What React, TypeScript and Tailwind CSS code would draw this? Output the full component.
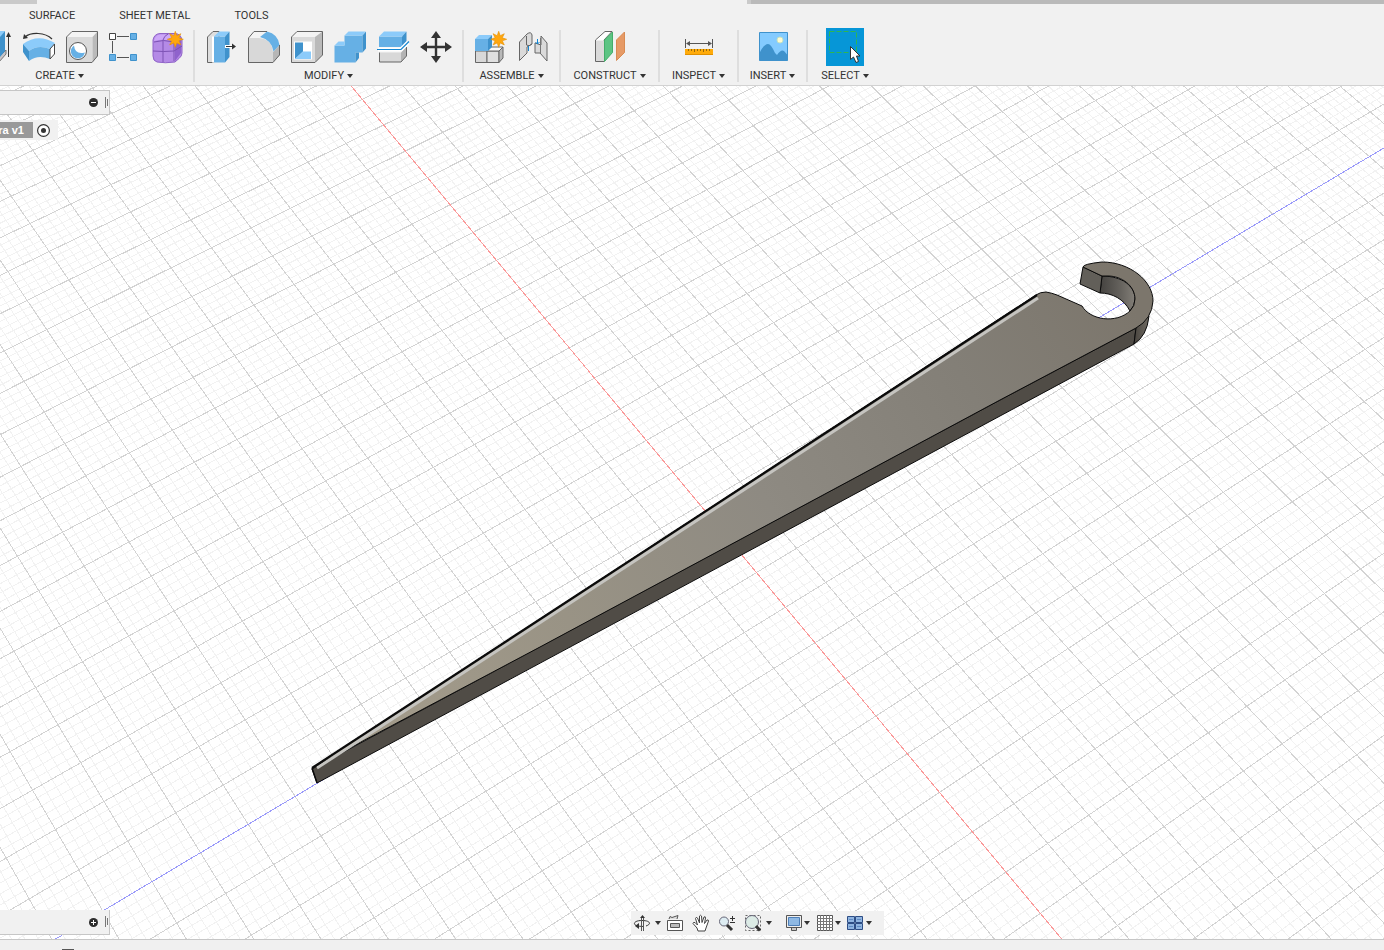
import type { ReactNode } from "react";
import clsx from "clsx";

const Caret = () => (
    <svg width="6" height="4" viewBox="0 0 6 4" className="shrink-0">
        <path d="M0 0h6L3 4z" fill="#333" />
    </svg>
);

const Icon = ({ children }: { children: ReactNode }) => (
    <svg
        width="34"
        height="34"
        viewBox="0 0 34 34"
        fill="none"
        className="shrink-0"
    >
        {children}
    </svg>
);

const Star = ({ x, y }: { x: number; y: number }) => (
    <path
        transform={`translate(${x} ${y})`}
        d="M0-8 1.5-3.6 5.6-5.6 3.6-1.5 8 0 3.6 1.5 5.6 5.6 1.5 3.6 0 8-1.5 3.6-5.6 5.6-3.6 1.5-8 0-3.6-1.5-5.6-5.6-1.5-3.6z"
        fill="#ffa70f"
        stroke="#e69100"
        strokeWidth=".6"
    />
);

const Extrude = () => (
    <Icon>
        <path d="M4 32V27h16l7-7v4l-7 8z" fill="#c9c5c8" stroke="#777" />
        <path d="M4 8h17v19H4z" fill="#66b0e5" />
        <path d="M4 8 11 1h15l-5 7z" fill="#8ccbfa" />
        <path d="M21 7 26 1v20l-5 6z" fill="#3f92cc" />
        <path d="M29.500 27V5" stroke="#333" />
        <path d="M29.500 2 27 7h5z" fill="#333" />
    </Icon>
);

const Revolve = () => (
    <Icon>
        <path d="M30 9C23 2 9 2 3 7" stroke="#333" strokeWidth="1.200" />
        <path d="m1 9 1-5 4 4z" fill="#333" />
        <path d="M1 14Q16 3 33 13L28 19Q16 14 7 21Z" fill="#8ccbfa" />
        <path d="M7 21Q16 14 28 19V29Q16 24 7 31Z" fill="#66b0e5" />
        <path d="M1 14 7 21V31L1 22Z" fill="#3f92cc" />
        <path d="M28 19 32.500 14V24L28 29Z" fill="#fff" stroke="#444" />
    </Icon>
);

const Hole = () => (
    <Icon>
        <path d="M1.500 7h26v25.500h-26z" fill="#dadada" />
        <path d="m1.500 7 5.500-5.500h25.500L27.500 7z" fill="#f4f4f4" />
        <path d="m27.500 7 5-5.500V26l-5 6.500z" fill="#bababa" />
        <path d="M1.500 7 7 1.500h25.500V26l-5.500 6.500H1.500z" stroke="#666" />
        <circle cx="13" cy="21" r="8.500" fill="#fff" stroke="#555" />
        <path d="M9 15.500A7 7 0 1 0 19.800 22.500Q10 25 9 15.500Z" fill="#66b0e5" />
    </Icon>
);

const Pattern = () => (
    <Icon>
        <path d="M9 6.500h12M4.500 11v12M9 27.500h12" stroke="#555" />
        <path d="M1.500 3.500h6v6h-6z" fill="#fff" stroke="#444" />
        <path
            d="M22.500 3.500h6v6h-6zM1.500 24.500h6v6h-6zM22.500 24.500h6v6h-6z"
            fill="#66b0e5"
            stroke="#3f92cc"
        />
    </Icon>
);

const Form = () => (
    <Icon>
        <path
            d="M2 10Q3 4 9 3.500H24Q30 4 31 10V23Q31 26 28 28.500L24 32Q14 33.500 6 32Q2 31 2 26Z"
            fill="#b48ae6"
            stroke="#8f63c8"
        />
        <path d="M3 11Q4 5 9 4.500H24L21 10.500Q10 9 3 11Z" fill="#cda7f8" />
        <path d="M24 12 30 8V23L24 31Z" fill="#8f62cc" />
        <path
            d="M3 12Q12 9 23 12L30 8M2 21Q13 22 23 21L31 16M12 32V10Q13 6 17 4M23 31V12"
            stroke="#7c52b4"
        />
        <Star x={24.300} y={9.300} />
    </Icon>
);

const PressPull = () => (
    <Icon>
        <path d="M3.500 32.500V7L9 1.500h6V28l-6 4.500z" fill="#dedede" stroke="#666" />
        <path d="M9 6.500v26" stroke="#fff" strokeWidth="2" />
        <path d="M10 6.500h11v26H10z" fill="#66b0e5" />
        <path d="m10 6.500 5-5h10.500l-4.500 5z" fill="#8ccbfa" />
        <path d="m21 6.500 4.500-5V27L21 32.500z" fill="#3f92cc" />
        <path d="M21 16.500h8" stroke="#fff" strokeWidth="3" />
        <path d="M22 16.500h8" stroke="#333" />
        <path d="m28 13.500 4 3-4 3z" fill="#333" />
    </Icon>
);

const Fillet = () => (
    <Icon>
        <path d="M1.500 8 7 1.500h14L32 15v10l-6 7.500H1.500z" fill="#f4f4f4" />
        <path d="M1.500 8H12Q25 9 26 22V32.500H1.500Z" fill="#d8d8d8" />
        <path d="m26 22 6.500-7v10.500L26 32.500z" fill="#b6b6b6" />
        <path d="M13 7 20 1.500Q31 4 32.500 15L26.500 21.500Q25 10 13 7Z" fill="#66b0e5" />
        <path d="M20 1.500H7L1.500 8V32.500H26L32.500 25V15" stroke="#666" />
    </Icon>
);

const Shell = () => (
    <Icon>
        <path d="M1.500 7H25v25.500H1.500z" fill="#dadada" />
        <path d="M1.500 7 7 1.500h25.500L25 7z" fill="#f4f4f4" />
        <path d="m25 7 7.500-5.500V25L25 32.500z" fill="#bababa" />
        <path d="M1.500 7 7 1.500h25.500V25L25 32.500H1.500z" stroke="#666" />
        <path d="M4 11.500h18v18H4z" fill="#fff" />
        <path d="M5 12.500h8v9l-8 7.500z" fill="#3f92cc" />
        <path d="m5 29 8-7.500h8V29z" fill="#8ccbfa" />
    </Icon>
);

const Combine = () => (
    <Icon>
        <path d="M1.500 15.500h10V5.500h18v17h-7v10h-21z" fill="#66b0e5" />
        <path d="m11.500 5.500 4-4h17l-3 4zM1.500 15.500l4-4h6v4z" fill="#8ccbfa" />
        <path d="m29.500 5.500 3.500-4v17l-3.500 4zM22.500 22.500H26V28l-3.500 4.500z" fill="#3f92cc" />
    </Icon>
);

const Split = () => (
    <Icon>
        <path d="M3 6.500h23V17H3z" fill="#66b0e5" />
        <path d="M3 6.500 8 1.500h22.500l-4.500 5z" fill="#8ccbfa" />
        <path d="m26 6.500 4.500-5V12L26 17z" fill="#3f92cc" />
        <path d="M3.500 22.500H25V32H3.500z" fill="#d8d8d8" />
        <path d="m25 22.500 5.500-6V26L25 32z" fill="#b4b4b4" />
        <path d="M3.500 22.500V32H25l5.500-6v-9" stroke="#666" />
        <path d="M2 19.500h23l7-7" stroke="#fff" strokeWidth="4" />
        <path d="M1 19.500h24l8-8" stroke="#1686d0" strokeWidth="1.200" />
    </Icon>
);

const Move = () => (
    <Icon>
        <path d="M5 17h24M17 5v24" stroke="#333" strokeWidth="2.400" />
        <path
            d="m17 1 5 7H12zM17 33l5-7H12zM1 17l7-5v10zM33 17l-7-5v10z"
            fill="#333"
        />
    </Icon>
);

const NewComponent = () => (
    <Icon>
        <path d="M2.500 21H14v11.500H2.500z" fill="#d8d8d8" stroke="#666" />
        <path d="M14 21h12v11.500H14z" fill="#e0e0e0" stroke="#666" />
        <path d="m14 21 4-4h12l-4 4z" fill="#fafafa" stroke="#666" />
        <path d="m26 21 4-4v11l-4 4.500z" fill="#b8b8b8" stroke="#666" />
        <path d="M2 9h13v12H2z" fill="#66b0e5" />
        <path d="m2 9 4-4h13l-4 4z" fill="#8ccbfa" />
        <path d="m15 9 4-4v12l-4 4z" fill="#3f92cc" />
        <Star x={25.700} y={9.300} />
    </Icon>
);

const Joint = () => (
    <Icon>
        <path
            d="M3.500 12 11 4Q15 1 16 5V14L11 17V23L3.500 30.500Z"
            fill="#dadada"
            stroke="#666"
        />
        <path d="M10.500 6V15Q13 17 16 14" stroke="#666" />
        <path d="M25 6 31 13V31L24 23H19V13L25 15Z" fill="#dadada" stroke="#666" />
        <path d="M24.500 8V23" stroke="#777" />
        <path d="M12.500 16v5M21.500 9v5M19.500 12l2 2 2-2" stroke="#1686d0" />
    </Icon>
);

const Construct = () => (
    <Icon>
        <path d="M2.500 10 12 1.500h7L11 10v21.500H2.500z" fill="#fff" stroke="#666" />
        <path d="M3 10.500h8V31H3z" fill="#dadada" />
        <path d="m11.500 10 8-8v20.500l-8 9z" fill="#5cc483" stroke="#43ad69" />
        <path d="m23.500 10 8-8v20.500l-8 8z" fill="#e69a66" stroke="#d98b52" />
    </Icon>
);

const Inspect = () => (
    <Icon>
        <path d="M3.500 9v9M30.500 9v9M6 13.500h22" stroke="#555" />
        <path d="m4 13.500 4-2.500v5zM30 13.500 26 11v5z" fill="#555" />
        <path d="M3 19h28v6H3z" fill="#ffab0a" />
        <path d="M3 24.500h28" stroke="#e09000" />
        <path
            d="M6.500 19v2M9.500 19v2M12.500 19v3M15.500 19v2M18.500 19v2M21.500 19v3M24.500 19v2M27.500 19v2"
            stroke="#96690c"
        />
    </Icon>
);

const Insert = () => (
    <Icon>
        <path d="M3.500 2.500h28v28h-28z" fill="#84cbff" />
        <path
            d="M3.500 23Q8 14 12 14Q15 14 19 23L21 25Q25 19 28 21L31.500 25V30.500H3.500Z"
            fill="#3f92cc"
        />
        <path d="M3.500 2.500h28v28h-28z" stroke="#3f92cc" />
        <circle cx="24" cy="10" r="3" fill="#fffbd2" stroke="#c6e3c0" />
    </Icon>
);

const Select = () => (
    <svg width="38" height="38" viewBox="0 0 38 38" fill="none">
        <path d="M0 0h38v38H0z" fill="#0696d7" />
        <path d="M3.500 3.500h27v21h-27z" stroke="#2fb552" strokeDasharray="5 2" />
        <path
            d="M24.500 18.500V31.500L27.500 29L30 34.500L32.500 33.500L30.500 28H34Z"
            fill="#fff"
            stroke="#333"
        />
    </svg>
);

const groups = [
    {
        label: "CREATE",
        width: "w-[267px] -ml-[74px]",
        align: "justify-end pr-2",
        icons: [Extrude, Revolve, Hole, Pattern, Form],
    },
    {
        label: "MODIFY",
        width: "w-[267px]",
        icons: [PressPull, Fillet, Shell, Combine, Split, Move],
    },
    { label: "ASSEMBLE", width: "w-[95px]", icons: [NewComponent, Joint] },
    { label: "CONSTRUCT", width: "w-[97px]", icons: [Construct] },
    { label: "INSPECT", width: "w-[77px]", icons: [Inspect] },
    { label: "INSERT", width: "w-[67px]", icons: [Insert] },
    { label: "SELECT", width: "w-[74px]", icons: [Select] },
];

const tabs = ["SURFACE", "SHEET METAL", "TOOLS"];

const Toolbar = () => (
    <header className="shrink-0 border-b border-[#d2d2d2] bg-[#f1f1f1]">
        <div className="flex h-1 justify-between">
            <div className="w-[37px] bg-[#cacaca]" />
            <div className="w-[46%] border-l-4 border-[#cacaca] bg-[#bababa]" />
        </div>

        <nav className="flex h-6 gap-11 pl-[29px]">
            {tabs.map((tab) => (
                <button key={tab} type="button" className="h-6">
                    {tab}
                </button>
            ))}
        </nav>

        <div className="flex h-[57px]">
            {groups.map(({ label, width, align, icons }, idx) => (
                <div key={label} className="flex shrink-0">
                    <div className={clsx("flex flex-col", width)}>
                        <div
                            className={clsx(
                                "flex h-[38px] shrink-0 items-center gap-[9px]",
                                align ?? "justify-center"
                            )}
                        >
                            {icons.map((Glyph, i) => (
                                <button
                                    key={i}
                                    type="button"
                                    aria-label={`${label} ${i + 1}`}
                                    className="shrink-0"
                                >
                                    <Glyph />
                                </button>
                            ))}
                        </div>
                        <button
                            type="button"
                            className="flex h-[19px] items-center justify-center gap-[3px] pt-px"
                        >
                            {label}
                            <Caret />
                        </button>
                    </div>
                    {idx < groups.length - 1 && (
                        <div className="mt-0.5 mb-[3px] w-0.5 bg-[#dedede]" />
                    )}
                </div>
            ))}
        </div>
    </header>
);

// Projects a point of the ground plane onto the canvas.
const project = (u: number, v: number) => {
    const w = 1 + 0.007138 * u - 0.010078 * v;
    const x = (728.1 + 45.4 * u + 20.736 * v) / w;
    const y = (538.5 - 20.1 * u + 28.28 * v) / w;
    return `${x.toFixed(1)} ${y.toFixed(1)}`;
};

// Five minor lines to each major one.
const gridPath = (major: boolean) => {
    let d = "";
    for (let i = -150; i <= 150; i++) {
        if (i === 0 || (i % 5 === 0) !== major) continue;
        const n = i / 5;
        d += `M${project(n, -32)}L${project(n, 32)}`;
        d += `M${project(-30, n)}L${project(30, n)}`;
    }
    return d;
};

const Scene = () => (
    <svg
        viewBox="0 86 1384 853"
        preserveAspectRatio="xMidYMid slice"
        className="absolute inset-0 h-full w-full"
        fill="none"
    >
        <defs>
            <linearGradient
                id="face"
                gradientUnits="userSpaceOnUse"
                x1="330"
                y1="760"
                x2="1130"
                y2="300"
            >
                <stop offset="0" stopColor="#a59d8c" />
                <stop offset=".3" stopColor="#999385" />
                <stop offset=".55" stopColor="#8e8a82" />
                <stop offset=".8" stopColor="#837f77" />
                <stop offset="1" stopColor="#7c766c" />
            </linearGradient>
            <linearGradient id="wall" x1="0" y1="0" x2="1" y2="0">
                <stop offset="0" stopColor="#44423f" />
                <stop offset=".6" stopColor="#66635e" />
                <stop offset="1" stopColor="#827e77" />
            </linearGradient>
            <linearGradient id="bend" x1="0" y1="0" x2="1" y2="0">
                <stop offset="0" stopColor="#48443e" />
                <stop offset="1" stopColor="#706b63" />
            </linearGradient>
        </defs>

        <g shapeRendering="crispEdges">
            <path d={gridPath(false)} stroke="#f2f2f2" />
            <path d={gridPath(true)} stroke="#d3d3d3" />
            <path
                d={`M${project(0, -32)}L${project(0, 32)}`}
                stroke="#fb9a9a"
            />
            <path
                d={`M${project(-30, 0)}L${project(30, 0)}`}
                stroke="#9a9afa"
            />
        </g>

        <g stroke="#0b0b0b" strokeLinejoin="round">
            <path
                d="M312 769 317 783 1000 416 1134 344 1136 328 1000 400Z"
                fill="#504c46"
            />
            <path
                d="M1136 328 1134 344Q1147 336 1149 316Z"
                fill="url(#bend)"
            />
            <path
                d="M1102 276C1122 276 1135 286 1135 299Q1135 306 1130 311C1124 299 1112 293 1100 293Z"
                fill="url(#wall)"
            />
            <path d="M1083 267 1102 276 1100 293 1080 284Z" fill="#625f59" />
            <path
                d="M312 768 1036 295Q1040 292 1046 292Q1052 293 1057 295L1082 306C1090 320 1116 324 1130 311Q1135 306 1135 299C1135 286 1122 276 1108 276L1102 276 1083 267Q1083 264 1102 262C1130 262 1153 281 1153 301Q1152 319 1136 328L1000 400 540 647Z"
                fill="url(#face)"
            />
            <path
                d="M317 768 1038 298"
                stroke="#c5c4c0"
                strokeWidth="3"
            />
            <path d="M312 768 1037 295" strokeWidth="2.200" />
            <path d="m312 768 5 15" strokeWidth="1.500" />
        </g>
    </svg>
);

const Grip = () => (
    <svg width="4" height="12" viewBox="0 0 4 12">
        <path d="M.5 0v11M2.500 2v7" stroke="#777" />
    </svg>
);

const PanelBar = ({ open }: { open?: boolean }) => (
    <div
        className={clsx(
            "flex h-[25px] w-[110px] items-center justify-end gap-[7px] border-r border-b border-[#c6c6c6] bg-[#f1f1f1]",
            open && "border-t"
        )}
    >
        <button type="button" aria-label={open ? "Collapse" : "Expand"}>
            <svg width="9" height="9" viewBox="0 0 9 9">
                <circle cx="4.500" cy="4.500" r="4.500" fill="#2d2d2d" />
                <path
                    d={open ? "M2 4.500h5" : "M2 4.500h5M4.500 2v5"}
                    stroke="#fff"
                />
            </svg>
        </button>
        <Grip />
    </div>
);

const NavIcon = ({ children }: { children: ReactNode }) => (
    <svg width="18" height="18" viewBox="0 0 18 18" fill="none" stroke="#333">
        {children}
    </svg>
);

const NavButton = ({
    label,
    menu,
    className,
    children,
}: {
    label: string;
    menu?: boolean;
    className?: string;
    children: ReactNode;
}) => (
    <button
        type="button"
        aria-label={label}
        className={clsx("flex items-center", className)}
    >
        <NavIcon>{children}</NavIcon>
        {menu && <Caret />}
    </button>
);

const NavBar = () => (
    <div className="mx-auto flex h-6 w-[253px] items-center bg-[#f1f1f1] pl-0.5">
        <NavButton label="Orbit" menu className="mr-[5px] gap-1">
            <path d="M13 12C19 10 17 6.500 9 6.500C1 6.500 0 10 3 11.500Q6 12.500 11 12.500" />
            <path d="M8.500 3v14M10.500 3v14" stroke="#555" />
            <path d="m7 4 2.500-3L12 4zM6 9v6l-4-3z" fill="#333" stroke="none" />
        </NavButton>
        <NavButton label="Look at" className="mr-2">
            <path d="M1.500 6.500h15v10h-15z" fill="#fff" stroke="#555" />
            <path d="M4.500 9.500h9v4h-9z" fill="#bbb" stroke="#555" />
            <path d="m3 5 1-2.500 2 1 6-2L11 5" fill="#ddd" stroke="#555" />
        </NavButton>
        <NavButton label="Pan" className="mr-2">
            <path
                d="M6 17 5 14 1 9.500Q1 8 3 8.500L5.500 11 3.500 4.500Q4 2.500 5.500 4L7.500 9V2Q8.500.5 9.500 2L10 8.500 12 3Q13.500 2 13.500 4L12.500 9.500 15 6Q16.500 5.500 16.500 7L14 14 13 17Z"
                fill="#fff"
                stroke="#444"
            />
        </NavButton>
        <NavButton label="Zoom" className="mr-2">
            <circle cx="6" cy="7.500" r="4.500" fill="#ddecf2" stroke="#667" />
            <path d="m9 11 5 5" strokeWidth="3" />
            <path d="M12 4.500h5M14.500 2v5M12 8.500h5" />
        </NavButton>
        <NavButton label="Fit" menu className="mr-[13px] gap-1">
            <path d="M1.500 1.500h15v15h-15z" stroke="#666" strokeDasharray="2 2" />
            <circle cx="8" cy="8" r="6.500" fill="#dcebe6" stroke="#667" />
            <path d="m12 12 4 4.500" strokeWidth="3" />
        </NavButton>
        <NavButton label="Display settings" menu className="mr-1.5 gap-px">
            <path d="M1.500 1.500h15v12h-15z" fill="#eee" stroke="#555" />
            <path d="M3.500 3.500h11v8h-11z" fill="#8fb9e4" stroke="#4e7fb8" />
            <path d="M6.500 14v2.500h5V14" fill="#ccc" stroke="#555" />
        </NavButton>
        <NavButton label="Grid and snaps" menu className="mr-[5px] gap-px">
            <path d="M1.500 1.500h15v15h-15z" fill="#fff" stroke="#555" />
            <path
                d="M4.500 1v16M7.500 1v16M10.500 1v16M13.500 1v16M1 4.500h16M1 7.500h16M1 10.500h16M1 13.500h16"
                stroke="#777"
            />
        </NavButton>
        <NavButton label="Viewports" menu className="gap-0.5">
            <path
                d="M1.500 2.500h7v6h-7zM9.500 2.500h7v6h-7zM1.500 9.500h7v6h-7zM9.500 9.500h7v6h-7z"
                fill="#8fb4e0"
                stroke="#2d4d85"
            />
            <path d="M3 5.500h4M11 5.500h4M3 12.500h4M11 12.500h4" stroke="#5f8bc4" />
        </NavButton>
    </div>
);

export default function App() {
    return (
        <div className="flex min-h-screen flex-col overflow-hidden bg-white font-['Roboto',sans-serif] text-[11px] leading-4 text-[#333]">
            <Toolbar />

            <main className="relative flex flex-1 flex-col overflow-hidden">
                <Scene />

                <div className="relative flex flex-1 flex-col items-start pt-1">
                    <PanelBar open />
                    <div className="mt-[5px] flex h-5 w-[58px] items-center gap-1 bg-[#f1f1f1]">
                        <span className="flex h-4 w-[33px] justify-end overflow-hidden bg-[#999] pr-[9px] font-['Liberation_Sans',sans-serif] font-bold whitespace-nowrap text-white">
                            ra v1
                        </span>
                        <button type="button" aria-label="Activate component">
                            <svg width="13" height="13" viewBox="0 0 13 13">
                                <circle
                                    cx="6.500"
                                    cy="6.500"
                                    r="5.900"
                                    fill="#fff"
                                    stroke="#333"
                                    strokeWidth="1.200"
                                />
                                <circle cx="6.500" cy="6.500" r="2.500" fill="#333" />
                            </svg>
                        </button>
                    </div>
                </div>

                <div className="relative flex items-end pb-1">
                    <div className="mr-[21px]">
                        <PanelBar />
                    </div>
                    <NavBar />
                </div>
            </main>

            <footer className="h-[11px] shrink-0 border-t border-[#c6c6c6] bg-[#f0f0f0] pt-[9px] pl-[62px]">
                <div className="h-px w-3 bg-[#555]" />
            </footer>
        </div>
    );
}
